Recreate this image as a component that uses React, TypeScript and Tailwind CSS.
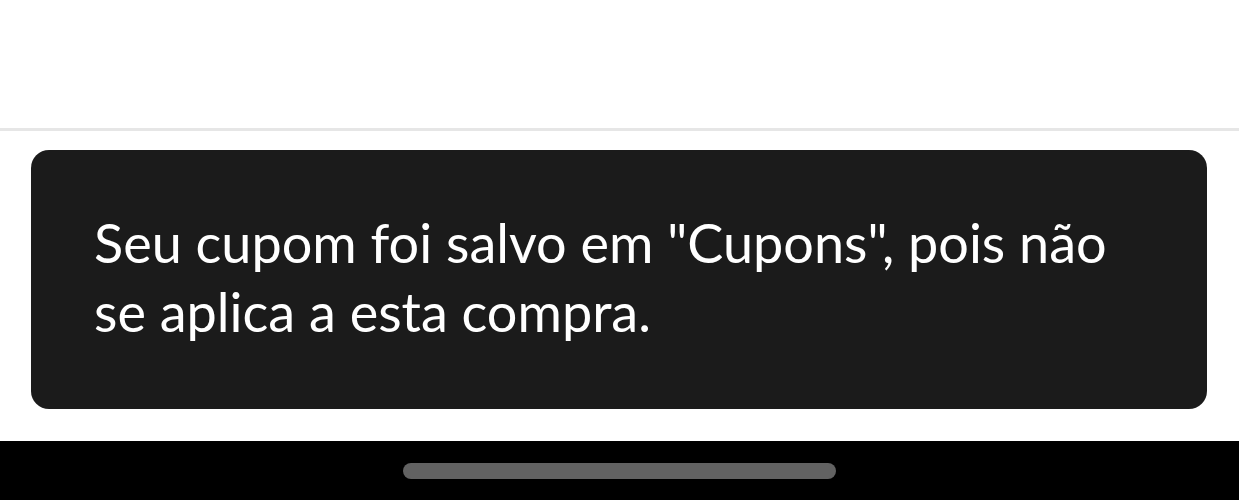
export default function App() {
  return (
    <div className="flex h-[500px] w-[1239px] flex-col bg-white" style={{ fontFamily: 'Lato, "Open Sans", sans-serif' }}>
      {/* page content above the toast */}
      <div className="h-[131px] border-b-[3px] border-[#e6e6e6]" />

      <div className="flex-1 px-[31px] pt-[19px]">
        <div className="flex h-[259px] w-[1176px] items-center rounded-[18px] bg-[#1b1b1b] pb-[6px] pl-[63px] pr-[60px]">
          <p className="text-[54px] leading-[69px] text-white">
            Seu cupom foi salvo em "Cupons", pois não se aplica a esta compra.
          </p>
        </div>
      </div>

      {/* home indicator */}
      <div className="flex h-[59px] items-center justify-center bg-black">
        <div className="h-[16px] w-[433px] rounded-full bg-[#626262]" />
      </div>
    </div>
  )
}
